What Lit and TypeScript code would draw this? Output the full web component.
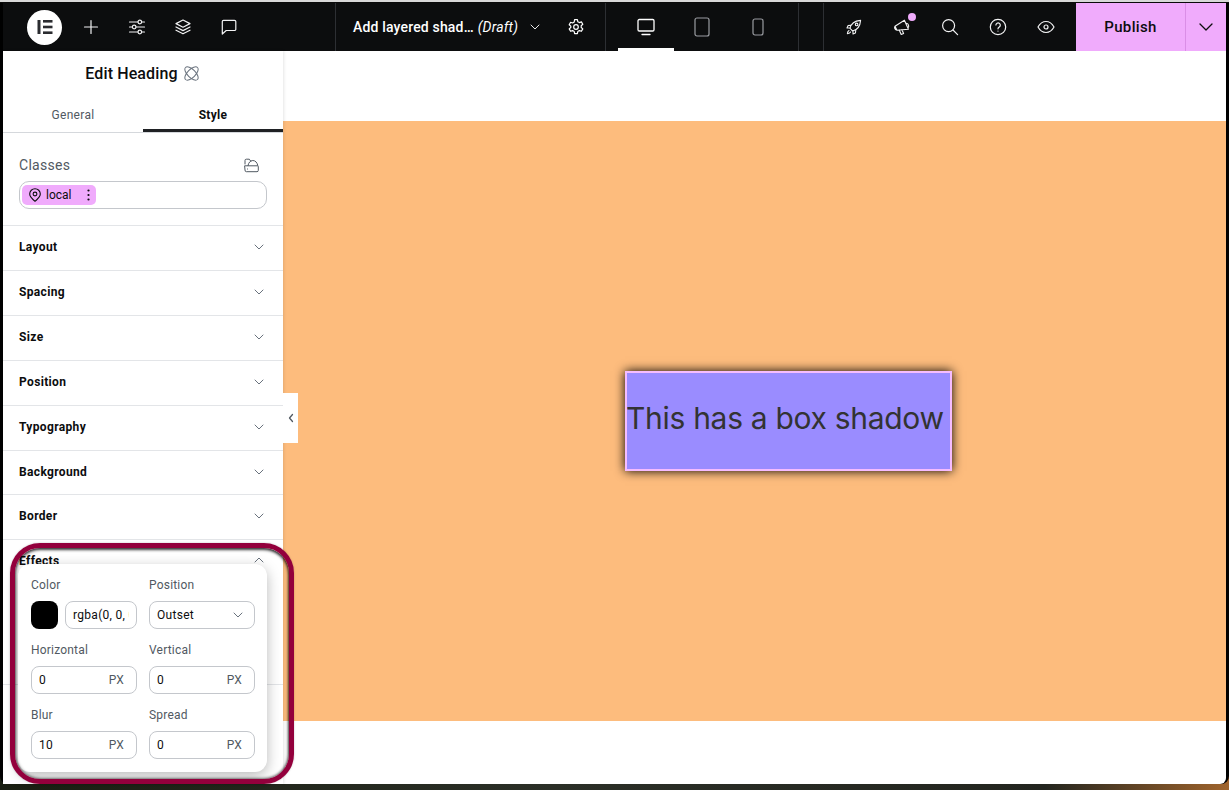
import { LitElement, html, css, svg } from "lit";
import { customElement } from "lit/decorators.js";

const I = (w: number, h: number, body: unknown, sw = 1.4) => html`<svg width=${w} height=${h} viewBox="0 0 ${w} ${h}" fill="none" stroke="currentColor" stroke-width=${sw} stroke-linecap="round" stroke-linejoin="round">${body}</svg>`;

const chev = (size = 12) => html`<svg width=${size} height=${size} viewBox="0 0 12 12" fill="none" stroke="currentColor" stroke-width="1" stroke-linecap="round" stroke-linejoin="round"><path d="M2 4l4 4 4-4"/></svg>`;

@customElement("app-root")
export class AppRoot extends LitElement {
  static styles = css`
    :host { display: block; width: 1229px; height: 790px; font-family: Roboto, "Liberation Sans", sans-serif; color: #0c0d0e; overflow: hidden; }
    * { box-sizing: border-box; }
    .screen { position: relative; width: 1229px; height: 790px; background: linear-gradient(90deg, #1a1f12 0%, #2b2f27 45%, #23251f 85%, #a0642c 100%); display: flex; flex-direction: column; }
    .topline { height: 3px; background: #0a0a0a; border-top: 2px solid #d8d8d8; flex: none; }
    .window { flex: none; width: 1229px; height: 781px; padding: 0 3px; background: #000; border-radius: 0 0 8px 8px; }
    .inner { width: 1223px; height: 781px; background: #fff; display: flex; flex-direction: column; position: relative; border-radius: 0 0 6px 6px; }
    .bar { height: 48px; background: #0c0d0e; color: #fff; display: flex; flex: none; }
    .sec { display: flex; align-items: center; border-right: 1px solid #2d2f33; height: 48px; }
    .sec-left { width: 333px; }
    .logo { width: 35px; height: 35px; border-radius: 50%; background: #fff; margin: 0 6px 0 24px; flex: none; display: flex; align-items: center; justify-content: center; color: #2b2c30; }
    .ib { width: 46px; height: 48px; display: flex; align-items: center; justify-content: center; flex: none; color: #f2f2f3; position: relative; }
    .sec-title { width: 270px; padding-left: 17px; font-size: 14px; font-weight: 500; letter-spacing: 0.17px; white-space: nowrap; }
    .sec-title em { font-weight: 400; margin-left: 4px; }
    .sec-title .c { display: flex; margin-left: 11px; color: #e8e8e9; }
    .sec-title .gear { margin-left: 26px; display: flex; }
    .sec-dev { width: 193px; padding-left: 12px; }
    .dev { width: 56px; height: 48px; display: flex; align-items: center; justify-content: center; color: #9a9ca1; position: relative; }
    .dev.on { color: #fff; border-bottom: 3px solid #fff; padding-top: 3px; }
    .sec-gap { width: 25px; }
    .tools { display: flex; padding-left: 6px; width: 252px; }
    .tools .ib { width: 48px; }
    .dot { position: absolute; width: 8px; height: 8px; border-radius: 50%; background: #f0abfc; top: 10px; right: 10px; }
    .publish { width: 110px; height: 48px; background: #f0abfc; color: #0c0d0e; font-size: 15px; font-weight: 500; letter-spacing: .35px; display: flex; align-items: center; justify-content: center; border-right: 1px solid #da8ee6; padding-bottom: 1px; }
    .pub-c { width: 40px; height: 48px; background: #f0abfc; display: flex; align-items: center; justify-content: center; color: #0c0d0e; }

    .main { flex: 1; display: flex; min-height: 0; position: relative; }
    .panel { width: 280px; flex: none; display: flex; flex-direction: column; background: #fff; box-shadow: 1px 0 3px rgba(0,0,0,.1); position: relative; }
    .ph { height: 44px; display: flex; align-items: center; justify-content: center; gap: 6px; font-size: 16px; font-weight: 500; color: #0c0d0e; padding-right: 2px; }
    .ph span { letter-spacing: .12px; }
    .ph svg { color: #69727d; }
    .tabs { display: flex; height: 38px; border-bottom: 1px solid #d5d8dc; }
    .tab { width: 140px; font-size: 12px; display: flex; align-items: center; justify-content: center; color: #515962; letter-spacing: .3px; padding-top: 3px; }
    .tab.on { color: #0c0d0e; font-weight: 700; border-bottom: 3px solid #1f2124; padding-top: 5px; }
    .classes { padding: 0 16px; height: 93px; border-bottom: 1px solid #e3e5e8; }
    .ch { display: flex; justify-content: space-between; align-items: center; height: 48px; padding-top: 16px; padding-right: 8px; font-size: 14px; color: #515962; letter-spacing: .3px; }
    .ch svg { color: #515962; }
    .cinput { height: 28px; border: 1px solid #c4c7cc; border-radius: 10px; padding: 3px 2px; }
    .chip { display: inline-flex; height: 20px; width: 74px; background: #f0abfc; border-radius: 5px; align-items: center; font-size: 12px; padding-left: 6px; color: #0c0d0e; }
    .chip .t { margin-left: 4px; flex: 1; }
    .chip .m { width: 14px; display: flex; justify-content: center; margin-right: 1px; }
    .row { height: 45px; border-bottom: 1px solid #e3e5e8; display: flex; align-items: center; justify-content: space-between; padding: 0 18px 2px 16px; font-size: 12px; font-weight: 700; color: #0c0d0e; letter-spacing: .35px; }
    .row.short { height: 44px; padding-bottom: 1px; }
    .row svg { color: #69727d; }
    .row.open { height: 145px; align-items: flex-start; padding-top: 14px; }

    .canvas { flex: 1; display: flex; flex-direction: column; }
    .pad-t { height: 70px; flex: none; }
    .stage { height: 600px; flex: none; background: #fdbc7d; display: flex; align-items: center; padding-left: 342px; }
    .box { width: 327px; height: 100px; background: #9a8cff; border: 2px solid #f5bcff; box-shadow: 0 0 10px #000; display: flex; align-items: center; font-family: Inter, Roboto, sans-serif; font-size: 30px; letter-spacing: -0.3px; color: #333; white-space: nowrap; }
    .box span { margin: -7px 0 0 -1px; }
    .collapse { position: absolute; left: 280px; top: 342px; width: 15px; height: 50px; background: #fff; display: flex; align-items: center; justify-content: center; color: #515962; }

    .pop { position: absolute; left: 15px; top: 513px; width: 249px; height: 208px; background: #fff; border-radius: 12px; box-shadow: 0 4px 14px rgba(0,0,0,.28); padding: 13px 12px 0 13px; display: grid; grid-template-columns: 106px 106px; column-gap: 12px; grid-auto-rows: 65px; font-size: 12px; color: #515962; }
    .f .l { height: 24px; letter-spacing: .2px; line-height: 16px; }
    .f .in { height: 28px; border: 1px solid #c4c7cc; border-radius: 8px; display: flex; align-items: center; justify-content: space-between; padding: 0 12px 0 7px; color: #0c0d0e; letter-spacing: .3px; }
    .f .in .u { color: #515962; letter-spacing: .2px; }
    .colr { display: flex; gap: 7px; }
    .sw { width: 27px; height: 28px; background: #000; border-radius: 8px; flex: none; }
    .colr .in { flex: 1; min-width: 0; padding: 0 7px; }
    .ti { border: 0; outline: 0; padding: 0; margin: 0; width: 100%; min-width: 0; background: none; font: inherit; letter-spacing: .3px; color: #0c0d0e; }
    .sel svg { color: #69727d; }
    .sel.in { padding-right: 10px; }
    .ring { position: absolute; left: 7px; top: 492px; width: 284px; height: 241px; border: 5px solid #93003c; border-radius: 30px; box-shadow: 0 0 2px rgba(0,0,0,.25), inset 0 2px 3px rgba(0,0,0,.7), inset -1px 0 3px rgba(0,0,0,.5), inset 1px -1px 3px rgba(0,0,0,.3); pointer-events: none; }
  `;

  render() {
    const rows = ["Layout", "Spacing", "Size", "Position", "Typography"];
    return html`<div class="screen">
      <div class="topline"></div>
      <div class="window"><div class="inner">
        <div class="bar">
          <div class="sec sec-left">
            <div class="logo">
              <svg width="16" height="16" viewBox="0 0 16 16" fill="currentColor"><rect x="0.5" y="1" width="3" height="14"/><rect x="6" y="1" width="9.5" height="2.6"/><rect x="6" y="6.7" width="9.5" height="2.6"/><rect x="6" y="12.4" width="9.5" height="2.6"/></svg>
            </div>
            <div class="ib">${I(16, 16, svg`<path d="M8 1.5v13M1.5 8h13"/>`, 1.2)}</div>
            <div class="ib">${I(18, 18, svg`<path d="M1.5 4h8.5M13.5 4h3M1.5 9h3M8 9h8.5M1.5 14h8.5M13.5 14h3"/><circle cx="11.8" cy="4" r="1.8"/><circle cx="6.2" cy="9" r="1.8"/><circle cx="11.8" cy="14" r="1.8"/>`, 1.2)}</div>
            <div class="ib">${I(16, 16, svg`<path d="M8 1L1 4.6l7 3.6 7-3.6L8 1zM1 8l7 3.6L15 8M1 11.2l7 3.6 7-3.6"/>`, 1.2)}</div>
            <div class="ib">${I(16, 16, svg`<path d="M2.5 1.3h11a1.3 1.3 0 0 1 1.3 1.3v7.6a1.3 1.3 0 0 1-1.3 1.3H5.2L1.3 15V2.6a1.3 1.3 0 0 1 1.2-1.3z"/>`, 1.2)}</div>
          </div>
          <div class="sec sec-title">
            <span>Add layered shad…</span><em>(Draft)</em>
            <span class="c">${chev(12)}</span>
            <span class="gear">${I(18, 18, svg`<path d="M7.6 1.6h2.8l.4 2.1 1.6.9 2-.7 1.4 2.4-1.6 1.4v1.8l1.6 1.4-1.4 2.4-2-.7-1.6.9-.4 2.1H7.6l-.4-2.1-1.6-.9-2 .7-1.4-2.4 1.6-1.4V8.1L2.2 6.7l1.4-2.4 2 .7 1.6-.9z"/><circle cx="9" cy="9" r="2.3"/>`, 1.2)}</span>
          </div>
          <div class="sec sec-dev">
            <div class="dev on">${I(18, 18, svg`<rect x="1" y="1.5" width="16" height="11.5" rx="1.3"/><path d="M5 16.5h8"/>`, 1.3)}</div>
            <div class="dev">${I(16, 20, svg`<rect x="1" y="1" width="14" height="18" rx="2"/>`, 1.2)}</div>
            <div class="dev">${I(12, 18, svg`<rect x="1" y="1" width="10" height="16" rx="2"/>`, 1.2)}</div>
          </div>
          <div class="sec sec-gap"></div>
          <div class="tools">
            <div class="ib">${I(18, 18, svg`<path d="M6.3 11.7L5 10.400C5.800 6.500 8.700 3 15.600 2.400 15 9.300 11.500 12.200 7.600 13zM5.600 7.200L3 7.600 2 10h3.100M10.800 12.400L10.400 15 8 16v-3.100"/><circle cx="11.600" cy="6.400" r="1.300"/><path d="M4 12.500c-1 .4-1.500 1.500-1.600 3.100 1.600-.1 2.700-.6 3.100-1.600"/>`, 1.1)}</div>
            <div class="ib">${I(18, 18, svg`<path d="M2 8.300L11.400 2.200 15.400 11.200 4 12.200z M2 8.300c-.8.800-.7 3.200 2 3.900M6.200 12l2 4.500 2.400-1-1.700-3.800M13.600 5.300c1.800.2 2.900 3.200 1.400 4.600"/>`, 1.1)}<span class="dot"></span></div>
            <div class="ib">${I(18, 18, svg`<circle cx="7.6" cy="7.6" r="6"/><path d="M12 12l4.6 4.6"/>`, 1.2)}</div>
            <div class="ib">${I(18, 18, svg`<circle cx="9" cy="9" r="7.7"/><path d="M6.9 7a2.2 2.2 0 1 1 3.4 2c-.8.5-1.3.9-1.3 1.8M9 13v.1"/>`, 1.2)}</div>
            <div class="ib">${I(18, 14, svg`<path d="M1 7c2-3.6 4.8-5.5 8-5.5S15 3.4 17 7c-2 3.6-4.8 5.5-8 5.5S3 10.6 1 7z"/><circle cx="9" cy="7" r="2"/>`, 1.2)}</div>
          </div>
          <div class="publish">Publish</div>
          <div class="pub-c">${I(14, 8, svg`<path d="M1 1l6 6 6-6"/>`, 1.3)}</div>
        </div>

        <div class="main">
          <div class="panel">
            <div class="ph"><span>Edit Heading</span>${I(15, 15, svg`<ellipse cx="7.5" cy="7.5" rx="4" ry="8.5" transform="rotate(45 7.5 7.5)"/><ellipse cx="7.5" cy="7.5" rx="4" ry="8.5" transform="rotate(-45 7.5 7.5)"/>`, 1)}</div>
            <div class="tabs"><div class="tab">General</div><div class="tab on">Style</div></div>
            <div class="classes">
              <div class="ch"><span>Classes</span>${I(15, 15, svg`<path d="M1 6V2.5A1.3 1.3 0 0 1 2.3 1.2h3l1.5 2M1 7.800h12.500a.8.8 0 0 1 .8.8v3.800a1.300 1.300 0 0 1-1.300 1.300H2.300A1.300 1.300 0 0 1 1 12.400zM4 7.500c.5-3 2.500-5 4.800-5 2.500 0 4.500 2 5 5M3.500 11h.1"/>`, 1)}</div>
              <div class="cinput"><div class="chip">
                ${I(14, 14, svg`<path d="M7 13.300C4 10.800 1.700 8.700 1.700 6a5.300 5.300 0 0 1 10.600 0c0 2.700-2.300 4.800-5.300 7.300z"/><circle cx="7" cy="6" r="1.900"/>`, 1.1)}
                <span class="t">local</span>
                <span class="m"><svg width="3" height="12" viewBox="0 0 3 12" fill="currentColor"><circle cx="1.5" cy="1.5" r="1.1"/><circle cx="1.5" cy="6" r="1.1"/><circle cx="1.5" cy="10.5" r="1.1"/></svg></span>
              </div></div>
            </div>
            ${rows.map((r) => html`<div class="row"><span>${r}</span>${chev(12)}</div>`)}
            <div class="row short"><span>Background</span>${chev(12)}</div>
            <div class="row"><span>Border</span>${chev(12)}</div>
            <div class="row open"><span>Effects</span><svg width="12" height="12" viewBox="0 0 12 12" fill="none" stroke="currentColor" stroke-width="1" stroke-linecap="round" stroke-linejoin="round"><path d="M2 8l4-4 4 4"/></svg></div>
          </div>
          <div class="canvas">
            <div class="pad-t"></div>
            <div class="stage"><div class="box"><span>This has a box shadow</span></div></div>
          </div>
          <div class="collapse">${I(6, 10, svg`<path d="M4.5 1.5L1.5 5l3 3.5"/>`, 1.3)}</div>
          <div class="pop">
            <div class="f"><div class="l">Color</div><div class="colr"><div class="sw"></div><div class="in"><input class="ti" readonly value="rgba(0, 0, 0, 0.5)"></div></div></div>
            <div class="f"><div class="l">Position</div><div class="in sel"><span>Outset</span>${chev(12)}</div></div>
            <div class="f"><div class="l">Horizontal</div><div class="in"><span>0</span><span class="u">PX</span></div></div>
            <div class="f"><div class="l">Vertical</div><div class="in"><span>0</span><span class="u">PX</span></div></div>
            <div class="f"><div class="l">Blur</div><div class="in"><span>10</span><span class="u">PX</span></div></div>
            <div class="f"><div class="l">Spread</div><div class="in"><span>0</span><span class="u">PX</span></div></div>
          </div>
          <div class="ring"></div>
        </div>
      </div></div>
    </div>`;
  }
}
